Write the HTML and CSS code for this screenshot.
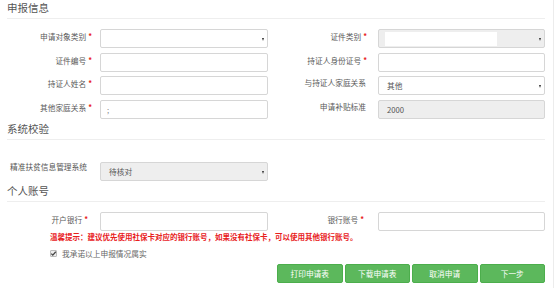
FILE: index.html
```html
<!DOCTYPE html>
<html lang="zh-CN">
<head>
    <meta charset="UTF-8">
    <meta name="viewport" content="width=device-width, initial-scale=1.0">
    <title>申报信息</title>
    <link rel="stylesheet" href="styles.css">
</head>
<body>
    <div class="page">
        <div class="section-title first">申报信息</div>

        <div class="form-grid">
            <label class="field-label">申请对象类别<i class="req">*</i></label>
            <div class="field"><span class="caret"></span></div>
            <label class="field-label right">证件类别<i class="req">*</i></label>
            <div class="field disabled"><span class="fill"></span><span class="caret"></span></div>

            <label class="field-label">证件编号<i class="req">*</i></label>
            <div class="field"></div>
            <label class="field-label right">持证人身份证号<i class="req">*</i></label>
            <div class="field"></div>

            <label class="field-label">持证人姓名<i class="req">*</i></label>
            <div class="field"></div>
            <label class="field-label right plain">与持证人家庭关系</label>
            <div class="field"><span class="value">其他</span><span class="caret"></span></div>

            <label class="field-label">其他家庭关系<i class="req">*</i></label>
            <div class="field"><span class="value hint">;</span></div>
            <label class="field-label right plain">申请补贴标准</label>
            <div class="field disabled"><span class="value">2000</span></div>
        </div>

        <div class="section-title second">系统校验</div>

        <div class="check-row">
            <label class="check-label">精准扶贫信息管理系统</label>
            <div class="field disabled"><span class="value">待核对</span><span class="caret"></span></div>
        </div>

        <div class="section-title third">个人账号</div>

        <div class="form-grid bank">
            <label class="field-label">开户银行<i class="req">*</i></label>
            <div class="field"></div>
            <label class="field-label right">银行账号<i class="req">*</i></label>
            <div class="field"></div>
        </div>

        <p class="warning">温馨提示：建议优先使用社保卡对应的银行账号，如果没有社保卡，可以使用其他银行账号。</p>

        <div class="promise">
            <span class="checkbox">
                <svg width="7" height="7" viewBox="0 0 7 7"><path d="M1.3 3.6 L2.8 5.1 L5.8 1.8" fill="none" stroke="#444" stroke-width="1.3"/></svg>
            </span>
            我承诺以上申报情况属实
        </div>

        <div class="actions">
            <button class="btn">打印申请表</button>
            <button class="btn">下载申请表</button>
            <button class="btn">取消申请</button>
            <button class="btn">下一步</button>
        </div>
    </div>
</body>
</html>
```

FILE: styles.css
```css
body {
    margin: 0;
    padding: 0;
    background-color: #fff;
    font-family: "Noto Sans CJK SC", "Liberation Sans", sans-serif;
    color: #555;
}

.page {
    width: 553px;
    height: 288px;
    border-right: 1px solid #ececec;
    overflow: hidden;
}

.section-title {
    margin-left: 7px;
    width: 538px;
    font-size: 10.5px;
    line-height: 12px;
    color: #555;
    padding-bottom: 4px;
    border-bottom: 1px solid #eee;
}

.section-title.first {
    margin-top: 2px;
}

.section-title.second {
    margin-top: 4px;
}

.section-title.third {
    margin-top: 4px;
}

.form-grid {
    display: grid;
    grid-template-columns: 100px 168px 110px 167px;
    grid-auto-rows: 19px;
    row-gap: 4.5px;
    margin-top: 10px;
}

.form-grid.bank {
    margin-top: 10px;
}

.field-label {
    font-size: 7.7px;
    line-height: 14px;
    color: #5a5a5a;
    text-align: right;
    padding-right: 8px;
    white-space: nowrap;
}

.field-label.right {
    padding-right: 11px;
}

.field-label.plain {
    padding-right: 12px;
}

.bank .field-label {
    padding-right: 12px;
}

.bank .field-label.right {
    padding-right: 14px;
}

.req {
    font-style: normal;
    font-weight: bold;
    color: #e8201c;
    margin-left: 2px;
    font-size: 7.5px;
    vertical-align: 1px;
}

.field {
    position: relative;
    box-sizing: border-box;
    height: 19px;
    border: 1px solid #d6d6d6;
    border-radius: 2px;
    background-color: #fff;
    display: flex;
    align-items: center;
}

.field.disabled {
    background-color: #eee;
}

.value {
    font-size: 7.7px;
    color: #555;
    padding-left: 8px;
}

.value.hint {
    color: #888;
    padding-left: 6px;
}

.fill {
    margin-left: 6px;
    width: 112px;
    height: 14px;
    background-color: #fff;
}

.caret {
    position: absolute;
    right: 3px;
    top: 8px;
    width: 0;
    height: 0;
    border-left: 1.5px solid transparent;
    border-right: 1.5px solid transparent;
    border-top: 3px solid #333;
}

.check-row {
    display: grid;
    grid-template-columns: 100px 168px;
    margin-top: 22px;
}

.check-row .field {
    height: 19px;
}

.check-label {
    font-size: 7.7px;
    line-height: 10px;
    color: #555;
    padding-left: 10px;
    white-space: nowrap;
}

.warning {
    margin: 1px 0 0 50px;
    font-size: 7.5px;
    line-height: 10px;
    font-weight: bold;
    color: #e8201c;
    white-space: nowrap;
}

.promise {
    margin: 7px 0 0 50px;
    display: flex;
    align-items: center;
    gap: 5px;
    font-size: 7.7px;
    line-height: 10px;
    color: #666;
}

.checkbox {
    box-sizing: border-box;
    width: 7px;
    height: 7px;
    border: 1px solid #bbb;
    border-radius: 1px;
    background-color: #eee;
    display: flex;
}

.checkbox svg {
    margin: -1px;
}

.actions {
    display: flex;
    justify-content: flex-end;
    gap: 2px;
    width: 545px;
    margin-top: 5px;
}

.btn {
    box-sizing: border-box;
    width: 65.5px;
    height: 19px;
    padding: 0;
    border: 1px solid #4cae4c;
    border-radius: 2px;
    background-color: #5cb85c;
    color: #fff;
    font-family: "Noto Sans CJK SC", "Liberation Sans", sans-serif;
    font-size: 7.7px;
    cursor: pointer;
}

.btn:hover {
    background-color: #449d44;
}
```
